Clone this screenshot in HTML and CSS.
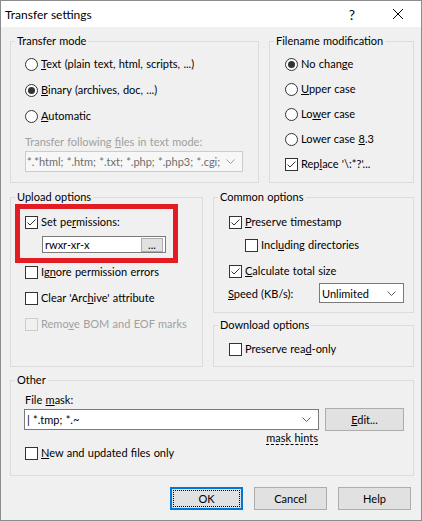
FILE: index.html
```html
<!DOCTYPE html>
<html lang="en">
<head>
    <meta charset="UTF-8">
    <title>Transfer settings</title>
    <link rel="stylesheet" href="styles.css">
</head>
<body>
<div class="window">
    <div class="titlebar">
        <span class="title">Transfer settings</span>
        <span class="title-btn help">?</span>
        <span class="title-btn close">
            <svg width="10" height="10" viewBox="0 0 10 10"><path d="M0 0 10 10M10 0 0 10"/></svg>
        </span>
    </div>

    <div class="dialog">
        <div class="row row-top">
            <fieldset class="group group-transfer">
                <legend>Transfer mode</legend>
                <div class="group-body">
                    <label class="opt"><span class="radio"></span><span><u>T</u>ext (plain text, html, scripts, ...)</span></label>
                    <label class="opt"><span class="radio checked"></span><span><u>B</u>inary (archives, doc, ...)</span></label>
                    <label class="opt"><span class="radio"></span><span><u>A</u>utomatic</span></label>
                    <div class="sub">
                        <span class="disabled-text">Transfer following <u>f</u>iles in text mode:</span>
                        <div class="combo combo-disabled combo-ascii">
                            <span class="combo-text">*.*html; *.htm; *.txt; *.php; *.php3; *.cgi; *.c; *.cpp</span>
                            <svg class="chevron" width="9" height="5" viewBox="0 0 9 5"><path d="M0.5 0.5 4.5 4.5 8.5 0.5"/></svg>
                        </div>
                    </div>
                </div>
            </fieldset>

            <fieldset class="group group-names">
                <legend>Filename modification</legend>
                <div class="group-body">
                    <label class="opt"><span class="radio checked"></span><span>No chan<u>g</u>e</span></label>
                    <label class="opt"><span class="radio"></span><span><u>U</u>pper case</span></label>
                    <label class="opt"><span class="radio"></span><span>Lo<u>w</u>er case</span></label>
                    <label class="opt"><span class="radio"></span><span>Lower case <u>8</u>.3</span></label>
                    <label class="opt"><span class="box checked"><svg viewBox="0 0 11 11"><path d="M1.5 5.5 4 8 9.5 2.5"/></svg></span><span>Rep<u>l</u>ace '\:*?'...</span></label>
                </div>
            </fieldset>
        </div>

        <div class="row row-mid">
            <fieldset class="group group-upload">
                <legend>Upload options</legend>
                <div class="group-body">
                    <div class="highlight">
                        <label class="opt"><span class="box checked"><svg viewBox="0 0 11 11"><path d="M1.5 5.5 4 8 9.5 2.5"/></svg></span><span>Set pe<u>r</u>missions:</span></label>
                        <div class="edit edit-perm">
                            <span class="edit-text">rwxr-xr-x</span>
                            <span class="dots-btn">...</span>
                        </div>
                    </div>
                    <label class="opt opt-ignore"><span class="box"></span><span>Ig<u>n</u>ore permission errors</span></label>
                    <label class="opt"><span class="box"></span><span>Clear 'Arc<u>h</u>ive' attribute</span></label>
                    <label class="opt disabled"><span class="box"></span><span>Remo<u>v</u>e BOM and EOF marks</span></label>
                </div>
            </fieldset>

            <div class="col-right">
                <fieldset class="group">
                    <legend>Common options</legend>
                    <div class="group-body body-common">
                        <label class="opt"><span class="box checked"><svg viewBox="0 0 11 11"><path d="M1.5 5.5 4 8 9.5 2.5"/></svg></span><span><u>P</u>reserve timestamp</span></label>
                        <label class="opt opt-indent"><span class="box"></span><span>Incl<u>u</u>ding directories</span></label>
                        <label class="opt opt-calc"><span class="box checked"><svg viewBox="0 0 11 11"><path d="M1.5 5.5 4 8 9.5 2.5"/></svg></span><span><u>C</u>alculate total size</span></label>
                        <div class="speed-row">
                            <span><u>S</u>peed (KB/s):</span>
                            <div class="combo combo-speed">
                                <span class="combo-text">Unlimited</span>
                                <svg class="chevron" width="9" height="5" viewBox="0 0 9 5"><path d="M0.5 0.5 4.5 4.5 8.5 0.5"/></svg>
                            </div>
                        </div>
                    </div>
                </fieldset>

                <fieldset class="group">
                    <legend>Download options</legend>
                    <div class="group-body body-download">
                        <label class="opt"><span class="box"></span><span>Preserve rea<u>d</u>-only</span></label>
                    </div>
                </fieldset>
            </div>
        </div>

        <div class="row row-bottom">
            <fieldset class="group group-other">
                <legend>Other</legend>
                <div class="group-body body-other">
                    <span class="mask-label">File <u>m</u>ask:</span>
                    <div class="combo combo-mask">
                        <span class="combo-text">| *.tmp; *.~</span>
                        <svg class="chevron" width="9" height="5" viewBox="0 0 9 5"><path d="M0.5 0.5 4.5 4.5 8.5 0.5"/></svg>
                    </div>
                    <button class="btn btn-edit" type="button"><u>E</u>dit...</button>
                    <span class="mask-hints">mask hints</span>
                    <label class="opt opt-new"><span class="box"></span><span><u>N</u>ew and updated files only</span></label>
                </div>
            </fieldset>
        </div>

        <div class="buttons">
            <button class="btn btn-default" type="button">OK</button>
            <button class="btn" type="button">Cancel</button>
            <button class="btn" type="button">Help</button>
        </div>
    </div>
</div>
</body>
</html>
```

FILE: styles.css
```css
* {
    box-sizing: border-box;
}

body {
    margin: 0;
    font-family: Lato, "Noto Sans", sans-serif;
    font-size: 11px;
    word-spacing: 0.5px;
    color: #000;
}

.window {
    width: 422px;
    height: 521px;
    border: 1px solid #8c8c8c;
    background-color: #f0f0f0;
}

.titlebar {
    height: 26px;
    background-color: #fff;
    display: flex;
    align-items: center;
    padding-left: 4px;
    font-size: 12px;
}

.title {
    flex: 1;
}

.title-btn {
    width: 46px;
    height: 26px;
    display: flex;
    align-items: center;
    justify-content: center;
}

.title-btn.help {
    font-size: 14px;
}

.title-btn svg path {
    stroke: #000;
    stroke-width: 1;
}

.dialog {
    padding: 6px 7px 0 9px;
}

.row {
    display: flex;
    gap: 10px;
}

.row-mid {
    margin-top: 6px;
}

.row-bottom {
    margin-top: 5px;
}

/* group boxes */
.group {
    margin: 0;
    padding: 0;
    min-width: 0;
    border: 1px solid #dcdcdc;
}

.group legend {
    margin-left: 4px;
    padding: 0 2px;
    line-height: 16px;
}

.group-body {
    display: flex;
    flex-direction: column;
}

.group-transfer {
    width: 249px;
}

.group-transfer .group-body {
    padding: 7px 14px 10px;
    gap: 10px;
}

.group-names {
    flex: 1;
}

.group-names .group-body {
    padding: 7px 0 0 15px;
    gap: 9px;
}

.group-upload {
    width: 193px;
}

.group-upload .group-body {
    padding: 9px 0 0 14px;
}

.group-upload .opt + .opt {
    margin-top: 10px;
}

.col-right {
    flex: 1;
    display: flex;
    flex-direction: column;
    gap: 4px;
}

.body-common {
    padding: 9px 9px 9px 15px;
}

.body-download {
    padding: 8px 0 9px 15px;
}

.group-other {
    flex: 1;
}

/* options */
.opt {
    display: flex;
    align-items: center;
    height: 16px;
    line-height: 16px;
    white-space: nowrap;
}

.radio,
.box {
    flex: none;
    width: 13px;
    height: 13px;
    margin-right: 3px;
    border: 1px solid #333;
    background-color: #fff;
    display: flex;
    align-items: center;
    justify-content: center;
}

.radio {
    border-radius: 50%;
}

.radio.checked::after {
    content: "";
    width: 7px;
    height: 7px;
    border-radius: 50%;
    background-color: #333;
}

.box svg {
    width: 11px;
    height: 11px;
}

.box svg path {
    fill: none;
    stroke: #333;
    stroke-width: 1;
}

.opt.disabled {
    color: #a0a0a0;
}

.opt.disabled .box {
    border-color: #cccccc;
    background-color: #f0f0f0;
}

.disabled-text {
    color: #a0a0a0;
    line-height: 16px;
    white-space: nowrap;
}

.sub {
    display: flex;
    flex-direction: column;
    gap: 1px;
}

/* combos and edits */
.combo,
.edit {
    display: flex;
    align-items: center;
    border: 1px solid #7a7a7a;
    background-color: #fff;
    overflow: hidden;
}

.combo-text,
.edit-text {
    flex: 1;
    min-width: 0;
    overflow: hidden;
    white-space: nowrap;
    padding-left: 1px;
}

.chevron {
    flex: none;
    margin: 0 7px 0 4px;
}

.chevron path {
    fill: none;
    stroke: #606060;
    stroke-width: 1;
}

.combo-disabled {
    width: 218px;
    height: 21px;
    border-color: #cccccc;
    background-color: #f7f7f7;
    color: #6d6d6d;
}

.combo-disabled .chevron path {
    stroke: #a0a0a0;
}

.highlight {
    width: 143px;
    outline: 5px solid #e31b23;
    outline-offset: 5px;
}

.edit-perm {
    margin: 6px 0 0 17px;
    width: 124px;
    height: 17px;
    padding-right: 2px;
}

.edit-text {
    padding-left: 2px;
}

.dots-btn {
    width: 22px;
    height: 14px;
    line-height: 12px;
    text-align: center;
    background-color: #e1e1e1;
    border: 1px solid #adadad;
}

.group-upload .opt-ignore {
    margin-top: 11px;
}

.opt-indent {
    margin: 7px 0 0 16px;
}

.opt-calc {
    margin-top: 10px;
}

.speed-row {
    margin: 4px 0 0 -1px;
    display: flex;
    align-items: center;
    justify-content: space-between;
}

.combo-speed {
    width: 85px;
    height: 20px;
}

.combo-speed .combo-text {
    padding-left: 2px;
}

.body-other {
    display: grid;
    grid-template-columns: 295px 79px;
    column-gap: 6px;
    align-items: center;
    padding: 4px 0 14px 13px;
}

.mask-label {
    grid-column: 1 / -1;
    margin-left: 1px;
    line-height: 16px;
}

.combo-mask {
    height: 21px;
}

.combo-mask .combo-text {
    padding-left: 2px;
}

.mask-hints {
    grid-column: 1;
    justify-self: end;
    margin-right: 1px;
    line-height: 13px;
    text-decoration: underline dashed;
    text-underline-offset: 2px;
}

.opt-new {
    grid-column: 1 / -1;
    margin: 1px 0 0 1px;
}

/* buttons */
.btn {
    font: inherit;
    word-spacing: inherit;
    color: #000;
    width: 73px;
    height: 23px;
    padding: 0;
    background-color: #e1e1e1;
    border: 1px solid #adadad;
}

.btn-edit {
    width: 79px;
}

.btn-default {
    border-color: #0078d7;
    box-shadow: inset 0 0 0 1px #0078d7;
    outline: 1px dotted #000;
    outline-offset: -4px;
}

.buttons {
    display: flex;
    justify-content: flex-end;
    gap: 11px;
    margin-top: 11px;
    padding-right: 3px;
}
```
